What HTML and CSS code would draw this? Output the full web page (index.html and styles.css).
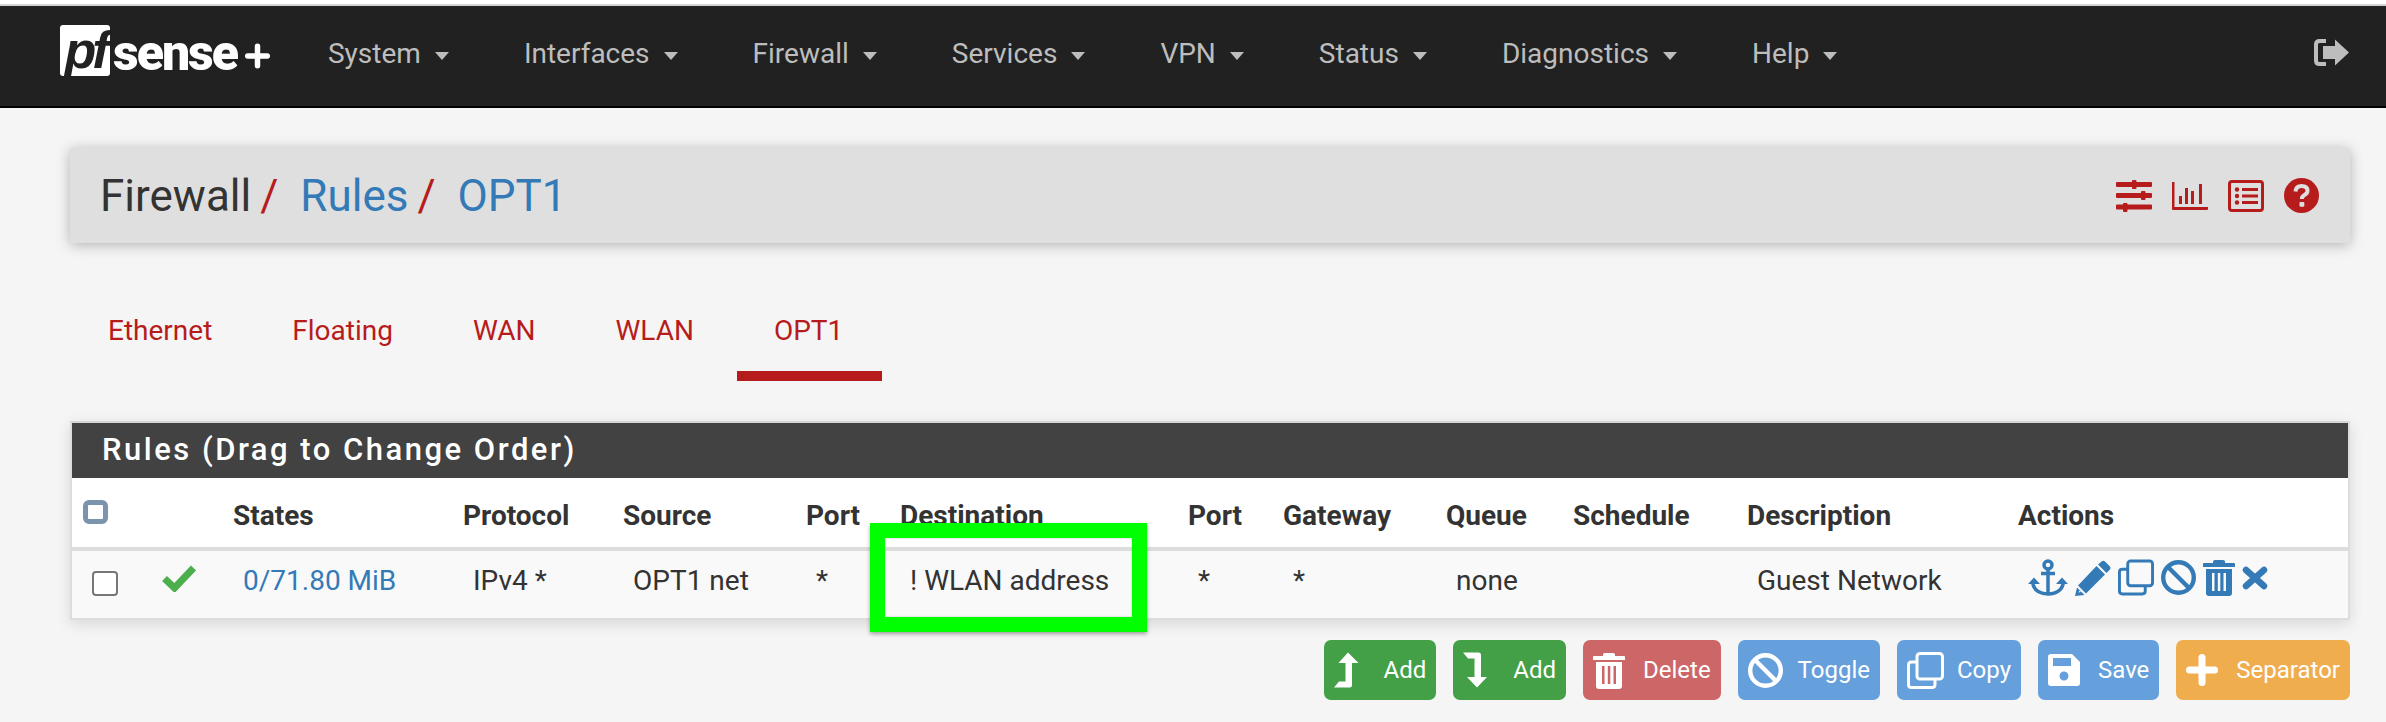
FILE: index.html
```html
<!DOCTYPE html>
<html lang="en">
<head>
<meta charset="utf-8">
<title>Firewall / Rules / OPT1</title>
<link rel="stylesheet" href="styles.css">
</head>
<body>
<svg class="sprite" xmlns="http://www.w3.org/2000/svg">
  <symbol id="i-sliders" viewBox="0 0 36 32"><path fill="currentColor" d="M1 2h34a1 1 0 0 1 1 1v3a1 1 0 0 1-1 1H1a1 1 0 0 1-1-1V3a1 1 0 0 1 1-1zM1 13h34a1 1 0 0 1 1 1v3a1 1 0 0 1-1 1H1a1 1 0 0 1-1-1v-3a1 1 0 0 1 1-1zM1 24.500h34a1 1 0 0 1 1 1v3a1 1 0 0 1-1 1H1a1 1 0 0 1-1-1v-3a1 1 0 0 1 1-1z"/><rect fill="currentColor" x="16" y="0" width="4.500" height="9" rx="1"/><rect fill="currentColor" x="25" y="11" width="4.500" height="9" rx="1"/><rect fill="currentColor" x="7" y="23" width="4.500" height="9" rx="1"/></symbol>
  <symbol id="i-chart" viewBox="0 0 36 28"><path fill="currentColor" d="M0 0h2.500v25H36v2a1 1 0 0 1-1 1H1a1 1 0 0 1-1-1zM7 14h3v8H7zM13 6h3v16h-3zM19 9h3v13h-3zM27 2h3v20h-3z"/></symbol>
  <symbol id="i-list" viewBox="0 0 36 32"><rect x="1.500" y="1.500" width="33" height="29" rx="2.500" fill="none" stroke="currentColor" stroke-width="3"/><circle cx="9" cy="9.500" r="2.200" fill="currentColor"/><circle cx="9" cy="16" r="2.200" fill="currentColor"/><circle cx="9" cy="22.500" r="2.200" fill="currentColor"/><path fill="currentColor" d="M14 8h16v3H14zM14 14.500h16v3H14zM14 21h16v3H14z"/></symbol>
  <symbol id="i-question" viewBox="0 0 35 35"><circle cx="17.500" cy="17.500" r="17.500" fill="currentColor"/><path d="M11.500 13.500Q12 8 17.500 8Q23.500 8 23.500 12.800Q23.500 15.500 20.500 17Q17.800 18.500 17.800 21" fill="none" stroke="#dfdfdf" stroke-width="4"/><rect x="15.500" y="24" width="4.800" height="4.800" rx="1" fill="#dfdfdf"/></symbol>
  <symbol id="i-signout" viewBox="0 0 35 27"><path d="M12 2H5.500Q2 2 2 5.500V21.500Q2 25 5.500 25H12" fill="none" stroke="currentColor" stroke-width="4"/><path fill="currentColor" d="M21 0.500L35 13.500L21 26.500V20H9V7H21z"/></symbol>
  <symbol id="i-check" viewBox="0 0 36 28"><path d="M3.500 14.500L13.500 24L32.500 4" fill="none" stroke="currentColor" stroke-width="7"/></symbol>
  <symbol id="i-anchor" viewBox="0 0 40 37"><circle cx="20" cy="6" r="4" fill="none" stroke="currentColor" stroke-width="3.500"/><path d="M20 10V34M13 14.500H27M4.500 23Q6 34.500 20 35Q34 34.500 35.500 23" fill="none" stroke="currentColor" stroke-width="3.500"/><path fill="currentColor" d="M0 25L6 18.500L12 25zM28 25L34 18.500L40 25z"/></symbol>
  <symbol id="i-pencil" viewBox="0 0 36 37"><path fill="currentColor" fill-rule="evenodd" d="M26 3Q28 1 30 2.500L34.500 7Q36.500 9 34.500 11L31.500 14L23 5.500zM21.500 7L30 15.500L11 34.500L3 26.500zM2 28.500L9.500 36L0 37zM4.500 31.500L6 33L3.500 33.500z"/></symbol>
  <symbol id="i-clone" viewBox="0 0 37 37"><rect x="10" y="1.500" width="25.500" height="25.500" rx="3" fill="none" stroke="currentColor" stroke-width="3"/><path d="M10 10H4.500Q1.500 10 1.500 13V32.500Q1.500 35.500 4.500 35.500H25Q28 35.500 28 32.500V27" fill="none" stroke="currentColor" stroke-width="3"/></symbol>
  <symbol id="i-ban" viewBox="0 0 35 35"><circle cx="17.500" cy="17.500" r="15.300" fill="none" stroke="currentColor" stroke-width="4.400"/><path d="M7 7L28 28" stroke="currentColor" stroke-width="4.400"/></symbol>
  <symbol id="i-trash" viewBox="0 0 32 37"><path fill="currentColor" fill-rule="evenodd" d="M10 2.500Q10 1 12 1H20Q22 1 22 2.500V4H31Q32 4 32 5V8H0V5Q0 4 1 4H10zM3 10H29V34Q29 37 26 37H6Q3 37 3 34zM9 14V32H11.500V14zM14.800 14V32H17.300V14zM20.500 14V32H23V14z"/></symbol>
  <symbol id="i-times" viewBox="0 0 26 24"><path d="M4 4L22 20M22 4L4 20" fill="none" stroke="currentColor" stroke-width="6.500" stroke-linecap="round"/></symbol>
  <symbol id="i-up" viewBox="0 0 25 36"><path fill="currentColor" d="M14 0.500L24.500 11H18V33Q18 35.500 15.500 35.500H0L5 29.500H11.500V11H4.500z"/></symbol>
  <symbol id="i-down" viewBox="0 0 25 36"><path fill="currentColor" d="M0 0.500H15.500Q18 0.500 18 3V25H24L14 35.500L4 25H11.500V6.500H5z"/></symbol>
  <symbol id="i-save" viewBox="0 0 32 32"><path fill="currentColor" fill-rule="evenodd" d="M3 0H24L32 8V29Q32 32 29 32H3Q0 32 0 29V3Q0 0 3 0zM5 4V12H23V4zM16 17.500A4.500 4.500 0 1 0 16 26.500A4.500 4.500 0 1 0 16 17.500z"/></symbol>
  <symbol id="i-plus" viewBox="0 0 32 32"><path d="M16 3.500V28.500M3.500 16H28.500" fill="none" stroke="currentColor" stroke-width="7" stroke-linecap="round"/></symbol>
</svg>

<div class="top-strip"></div>
<nav class="navbar">
  <a class="brand" href="#">
    <span class="brand-box"><span class="brand-pf">pf</span></span>
    <span class="brand-sense">sense</span>
    <svg class="brand-plus" width="25" height="26"><use href="#i-plus"/></svg>
  </a>
  <ul class="nav-menu">
    <li class="nav-item">System<span class="caret"></span></li>
    <li class="nav-item">Interfaces<span class="caret"></span></li>
    <li class="nav-item">Firewall<span class="caret"></span></li>
    <li class="nav-item">Services<span class="caret"></span></li>
    <li class="nav-item">VPN<span class="caret"></span></li>
    <li class="nav-item">Status<span class="caret"></span></li>
    <li class="nav-item">Diagnostics<span class="caret"></span></li>
    <li class="nav-item">Help<span class="caret"></span></li>
  </ul>
  <svg class="nav-logout" width="35" height="27"><use href="#i-signout"/></svg>
</nav>

<main class="content">
  <header class="page-header">
    <h1 class="crumbs">
      <span>Firewall</span><span class="crumb-sep">/</span>
      <a href="#">Rules</a><span class="crumb-sep">/</span>
      <a href="#">OPT1</a>
    </h1>
    <div class="page-icons">
      <svg width="36" height="32"><use href="#i-sliders"/></svg>
      <svg width="36" height="28"><use href="#i-chart"/></svg>
      <svg width="36" height="32"><use href="#i-list"/></svg>
      <svg width="35" height="35"><use href="#i-question"/></svg>
    </div>
  </header>

  <ul class="tabs">
    <li class="tab">Ethernet</li>
    <li class="tab">Floating</li>
    <li class="tab">WAN</li>
    <li class="tab">WLAN</li>
    <li class="tab tab-active">OPT1</li>
  </ul>

  <section class="panel">
    <h2 class="panel-title">Rules (Drag to Change Order)</h2>
    <table class="rules">
      <colgroup>
        <col class="w-77"><col class="w-84"><col class="w-230"><col class="w-160"><col class="w-183"><col class="w-94"><col class="w-288"><col class="w-95"><col class="w-163"><col class="w-127"><col class="w-174"><col class="w-271"><col>
      </colgroup>
      <thead>
        <tr>
          <th class="th-check"><input class="check check-all" type="checkbox" aria-label="Select all"></th>
          <th></th>
          <th>States</th>
          <th>Protocol</th>
          <th>Source</th>
          <th>Port</th>
          <th>Destination</th>
          <th>Port</th>
          <th>Gateway</th>
          <th>Queue</th>
          <th>Schedule</th>
          <th>Description</th>
          <th>Actions</th>
        </tr>
      </thead>
      <tbody>
        <tr>
          <td class="td-check"><input class="check" type="checkbox" aria-label="Select rule"></td>
          <td class="td-status"><svg class="status-ok" width="36" height="28"><use href="#i-check"/></svg></td>
          <td><a href="#">0/71.80 MiB</a></td>
          <td>IPv4 *</td>
          <td>OPT1 net</td>
          <td>*</td>
          <td>! WLAN address</td>
          <td>*</td>
          <td>*</td>
          <td>none</td>
          <td></td>
          <td>Guest Network</td>
          <td>
            <div class="actions">
              <svg width="40" height="37"><use href="#i-anchor"/></svg>
              <svg width="36" height="37"><use href="#i-pencil"/></svg>
              <svg width="36" height="37"><use href="#i-clone"/></svg>
              <svg width="35" height="35"><use href="#i-ban"/></svg>
              <svg width="32" height="37"><use href="#i-trash"/></svg>
              <svg width="26" height="24"><use href="#i-times"/></svg>
            </div>
          </td>
        </tr>
      </tbody>
    </table>
    <div class="annotation"></div>
  </section>

  <div class="buttons">
    <a class="btn btn-green"><span class="btn-icon"><svg width="25" height="36"><use href="#i-up"/></svg></span>Add</a>
    <a class="btn btn-green"><span class="btn-icon"><svg width="25" height="36"><use href="#i-down"/></svg></span>Add</a>
    <a class="btn btn-red"><span class="btn-icon"><svg width="32" height="37"><use href="#i-trash"/></svg></span>Delete</a>
    <a class="btn btn-blue"><span class="btn-icon"><svg width="35" height="35"><use href="#i-ban"/></svg></span>Toggle</a>
    <a class="btn btn-blue"><span class="btn-icon"><svg width="37" height="37"><use href="#i-clone"/></svg></span>Copy</a>
    <a class="btn btn-blue"><span class="btn-icon"><svg width="32" height="32"><use href="#i-save"/></svg></span>Save</a>
    <a class="btn btn-orange"><span class="btn-icon"><svg width="32" height="32"><use href="#i-plus"/></svg></span>Separator</a>
  </div>
</main>
</body>
</html>
```

FILE: styles.css
```css
* { box-sizing: border-box; }
html, body { margin: 0; padding: 0; }
body {
  background: #f5f5f5;
  color: #333;
  font-family: Roboto, "Liberation Sans", sans-serif;
  font-size: 28px;
  height: 722px;
  overflow: hidden;
}
a { color: #337ab7; text-decoration: none; }
ul { list-style: none; margin: 0; padding: 0; }
svg { display: block; flex: none; }
.sprite { display: none; }

.top-strip { height: 6px; background: #fff; border-bottom: 2px solid #d4d4d4; }

.navbar {
  display: flex;
  align-items: center;
  height: 102px;
  padding: 0 37px 0 60px;
  background: #212121;
  border-bottom: 2px solid #000;
}
.brand { display: flex; align-items: center; margin-top: -12px; }
.brand-box {
  width: 50px;
  height: 51px;
  padding-top: 2px;
  background: #fff;
  border-radius: 3px;
  display: flex;
  justify-content: center;
}
.brand-pf {
  font-family: "Liberation Sans", sans-serif;
  font-style: italic;
  font-weight: 700;
  font-size: 52px;
  line-height: 46px;
  letter-spacing: -4px;
  color: #212121;
}
.brand-sense {
  margin-left: 3px;
  margin-top: 6px;
  font-weight: 900;
  font-size: 50px;
  line-height: 50px;
  letter-spacing: -2px;
  color: #fff;
}
.brand-plus { color: #fff; margin-left: 8px; margin-top: 12px; }
.nav-menu { display: flex; margin-left: 58px; gap: 75px; color: #bdbdbd; }
.nav-item { display: flex; align-items: center; line-height: 32px; margin-top: -4px; }
.caret {
  margin-left: 14px;
  margin-top: 3px;
  border-left: 7.500px solid transparent;
  border-right: 7.500px solid transparent;
  border-top: 8px solid #bdbdbd;
}
.nav-logout { margin-left: auto; margin-top: -7px; color: #bdbdbd; }

.content { padding: 40px 36px 0 70px; }
.page-header {
  display: flex;
  align-items: center;
  justify-content: space-between;
  height: 95px;
  padding: 0 31px 0 30px;
  background: #dfdfdf;
  border-radius: 2px;
  box-shadow: 0 2px 14px rgba(0, 0, 0, .28);
}
.crumbs { margin: 0; font-size: 44px; font-weight: 400; line-height: 50px; white-space: nowrap; }
.crumb-sep { color: #b71c1c; margin: 0 11px 0 9px; }
.page-icons { display: flex; align-items: center; gap: 20px; color: #b71c1c; }

.tabs { display: flex; gap: 8px; margin: 41px 0 0 2px; color: #b71c1c; }
.tab { padding: 32px 36px 35px; line-height: 30px; }
.tab-active { margin-left: -1px; padding-left: 37px; padding-right: 39px; box-shadow: inset 0 -10px 0 #b71c1c; }

.panel {
  position: relative;
  margin-top: 40px;
  background: #fff;
  border: 2px solid #ddd;
  border-top-color: #d5d5d5;
  box-shadow: 0 4px 14px rgba(0, 0, 0, .12);
}
.panel-title {
  margin: 0;
  height: 55px;
  padding-left: 30px;
  background: #424242;
  color: #fff;
  font-size: 31px;
  font-weight: 500;
  line-height: 53px;
  letter-spacing: 2.500px;
}
.rules { width: 100%; border-collapse: collapse; table-layout: fixed; }
.w-77 { width: 77px; } .w-84 { width: 84px; } .w-230 { width: 230px; } .w-160 { width: 160px; }
.w-183 { width: 183px; } .w-94 { width: 94px; } .w-288 { width: 288px; } .w-95 { width: 95px; }
.w-163 { width: 163px; } .w-127 { width: 127px; } .w-174 { width: 174px; } .w-271 { width: 271px; }
.rules th {
  height: 71px;
  padding: 6px 0 0;
  text-align: left;
  font-weight: 700;
  border-bottom: 4px solid #ddd;
}
.rules td { height: 69px; padding: 0 0 8px 10px; background: #f9f9f9; white-space: nowrap; }
.rules .th-check { padding-left: 11px; }
.rules .td-check { padding-left: 20px; }
.rules .td-status { padding-left: 12px; }
.status-ok { color: #4cae4c; margin-top: -6px; }
.check {
  appearance: none;
  display: block;
  width: 26px;
  height: 25px;
  margin: 5px 0 0;
  background: #fff;
  border: 2px solid #777;
  border-radius: 4px;
}
.check-all { width: 25px; height: 24px; border: 5px solid #7a94ab; border-radius: 6px; margin-top: -8px; }
.actions { display: flex; align-items: center; gap: 7px; color: #337ab7; margin-top: -6px; }
.annotation {
  position: absolute;
  left: 798px;
  top: 100px;
  width: 277px;
  height: 109px;
  border: 15px solid #0f0;
  box-shadow: 0 2px 4px rgba(0, 0, 0, .35), inset 0 0 2px rgba(0, 0, 0, .25);
}

.buttons { display: flex; justify-content: flex-end; gap: 17px; margin-top: 20px; }
.btn {
  display: flex;
  align-items: center;
  height: 60px;
  padding: 0 10px;
  border-radius: 7px;
  color: #fff;
  font-size: 24px;
}
.btn-icon { width: 50px; flex: none; }
.btn-green { background: #43a047; }
.btn-red { background: #cd6767; }
.btn-blue { background: #65a0dc; }
.btn-orange { background: #f0ad4e; }
```
